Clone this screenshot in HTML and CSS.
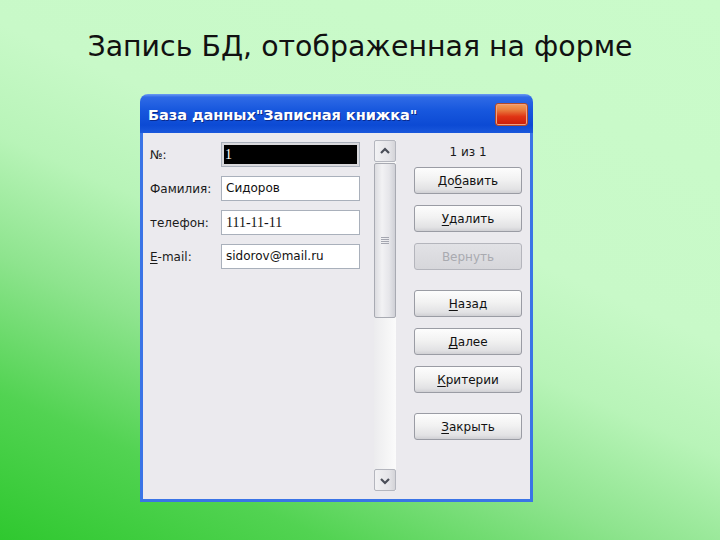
FILE: index.html
```html
<!DOCTYPE html>
<html lang="ru">
<head>
<meta charset="utf-8">
<title>Запись БД</title>
<link rel="stylesheet" href="styles.css">
</head>
<body>
<h1 class="title">Запись БД, отображенная на форме</h1>
<div class="window">
  <div class="titlebar">
    <span class="caption">База данных"Записная книжка"</span>
    <span class="close"></span>
  </div>
  <div class="client">
    <div class="fields">
      <div class="row"><span class="label">№:</span><div class="input selected">1</div></div>
      <div class="row"><span class="label">Фамилия:</span><div class="input">Сидоров</div></div>
      <div class="row"><span class="label">телефон:</span><div class="input serif">111-11-11</div></div>
      <div class="row"><span class="label"><u>E</u>-mail:</span><div class="input">sidorov@mail.ru</div></div>
    </div>
    <div class="scrollbar">
      <div class="sb-btn">
        <svg width="20" height="19" viewBox="0 0 20 19"><path d="M6 11 L10 7 L14 11" fill="none" stroke="#4a4e58" stroke-width="2.2"/></svg>
      </div>
      <div class="sb-thumb">
        <svg width="10" height="9" viewBox="0 0 10 9"><path d="M1 1.5H9M1 3.5H9M1 5.5H9M1 7.5H9" stroke="#a4a6b0" stroke-width="1"/></svg>
      </div>
      <div class="sb-track"></div>
      <div class="sb-btn">
        <svg width="20" height="19" viewBox="0 0 20 19"><path d="M6 8 L10 12 L14 8" fill="none" stroke="#4a4e58" stroke-width="2.2"/></svg>
      </div>
    </div>
    <div class="buttons">
      <div class="counter">1 из 1</div>
      <div class="btn first">До<u>б</u>авить</div>
      <div class="btn"><u>У</u>далить</div>
      <div class="btn disabled">Вернуть</div>
      <div class="btn group"><u>Н</u>азад</div>
      <div class="btn"><u>Д</u>алее</div>
      <div class="btn"><u>К</u>ритерии</div>
      <div class="btn group"><u>З</u>акрыть</div>
    </div>
  </div>
</div>
</body>
</html>
```
FILE: styles.css
```css
html, body {
  margin: 0;
  padding: 0;
}
body {
  width: 720px;
  height: 540px;
  overflow: hidden;
  background: linear-gradient(24deg, #2fc82f 0%, #52d352 17%, #8ee48e 33%, #b8f4b8 47%, #c8f9c8 60%, #cafbca 100%);
  font-family: "DejaVu Sans", sans-serif;
}
.title {
  margin: 0;
  padding-top: 27px;
  height: 40px;
  line-height: 40px;
  font-family: "DejaVu Sans", sans-serif;
  font-weight: normal;
  font-size: 28.4px;
  text-align: center;
  color: #111;
}
.window {
  margin: 27px 0 0 140px;
  width: 393px;
  height: 408px;
  display: flex;
  flex-direction: column;
}
.titlebar {
  height: 39px;
  border-radius: 8px 8px 0 0;
  background: linear-gradient(#6c9cf2 0%, #2f6ae6 8%, #1858de 40%, #0c4ad4 80%, #1a58dc 100%);
  display: flex;
  align-items: center;
  justify-content: space-between;
  padding: 0 5px 0 8px;
}
.caption {
  color: #fff;
  font-family: "DejaVu Sans", sans-serif;
  font-weight: bold;
  font-size: 14.6px;
  text-shadow: 1px 1px 0 #0b2a8c;
  letter-spacing: -0.1px;
  margin-top: 2px;
}
.close {
  width: 31px;
  height: 21px;
  border: 1px solid #b04a2a;
  border-radius: 3px;
  box-shadow: inset 0 0 0 1px #f0a080;
  background: linear-gradient(#f0a060 0%, #e87a3c 30%, #e03414 60%, #c81c0a 100%);
  margin-top: 2px;
}
.client {
  flex: 1;
  background: #ebeaee;
  border: 3px solid #3a74e6;
  border-top: none;
  display: flex;
  align-items: flex-start;
  padding-left: 7px;
}
.fields {
  display: flex;
  flex-direction: column;
  gap: 9px;
  padding-top: 9px;
}
.row {
  display: flex;
  align-items: center;
}
.label {
  width: 71px;
  font-size: 12px;
  color: #1a1a1a;
}
.input {
  box-sizing: border-box;
  width: 139px;
  height: 25px;
  border: 1px solid #a9b0bb;
  background: #fff;
  font-size: 12px;
  color: #111;
  padding-left: 4px;
  line-height: 23px;
}
.input.serif {
  font-family: "Liberation Serif", serif;
  font-size: 14px;
}
.input.selected {
  background: #000;
  color: #fff;
  box-shadow: inset 0 0 0 2px #d8d8dc;
  font-family: "Liberation Serif", serif;
  font-size: 14px;
  padding-left: 3px;
}
.scrollbar {
  margin: 7px 0 0 14px;
  width: 22px;
  height: 351px;
  display: flex;
  flex-direction: column;
  background: linear-gradient(to right, #ececee, #fbfbfb);
}
.sb-btn {
  box-sizing: border-box;
  height: 22px;
  border: 1px solid #b4b6be;
  border-radius: 2px;
  background: linear-gradient(to right, #f2f2f4, #e4e4e8 70%, #d4d4d8);
  display: flex;
  align-items: center;
  justify-content: center;
}
.sb-thumb {
  box-sizing: border-box;
  height: 155px;
  margin-top: 1px;
  border: 1px solid #a8aab2;
  border-radius: 2px;
  background: linear-gradient(to right, #dcdce0, #f2f2f4 35%, #e6e6ea 70%, #cfd0d6);
  display: flex;
  align-items: center;
  justify-content: center;
}
.sb-track {
  flex: 1;
}
.buttons {
  margin-left: 18px;
  width: 108px;
  padding-top: 9px;
  display: flex;
  flex-direction: column;
}
.counter {
  height: 20px;
  line-height: 20px;
  text-align: center;
  font-size: 12px;
  color: #1a1a1a;
  margin-bottom: 5px;
}
.btn {
  box-sizing: border-box;
  height: 27px;
  margin-top: 11px;
  border: 1px solid #9a9ca4;
  border-radius: 3px;
  background: linear-gradient(#fdfdfd 0%, #f2f2f2 45%, #e2e2e4 85%, #d0d0d4 100%);
  font-size: 12px;
  color: #111;
  display: flex;
  align-items: center;
  justify-content: center;
}
.btn.first {
  margin-top: 0;
}
.btn.group {
  margin-top: 20px;
}
.btn.disabled {
  color: #a9aab0;
  background: linear-gradient(#e2e2e6, #d6d6da);
  border-color: #b4b5bc;
}
u {
  text-decoration-thickness: 1px;
  text-underline-offset: 2px;
}
```
